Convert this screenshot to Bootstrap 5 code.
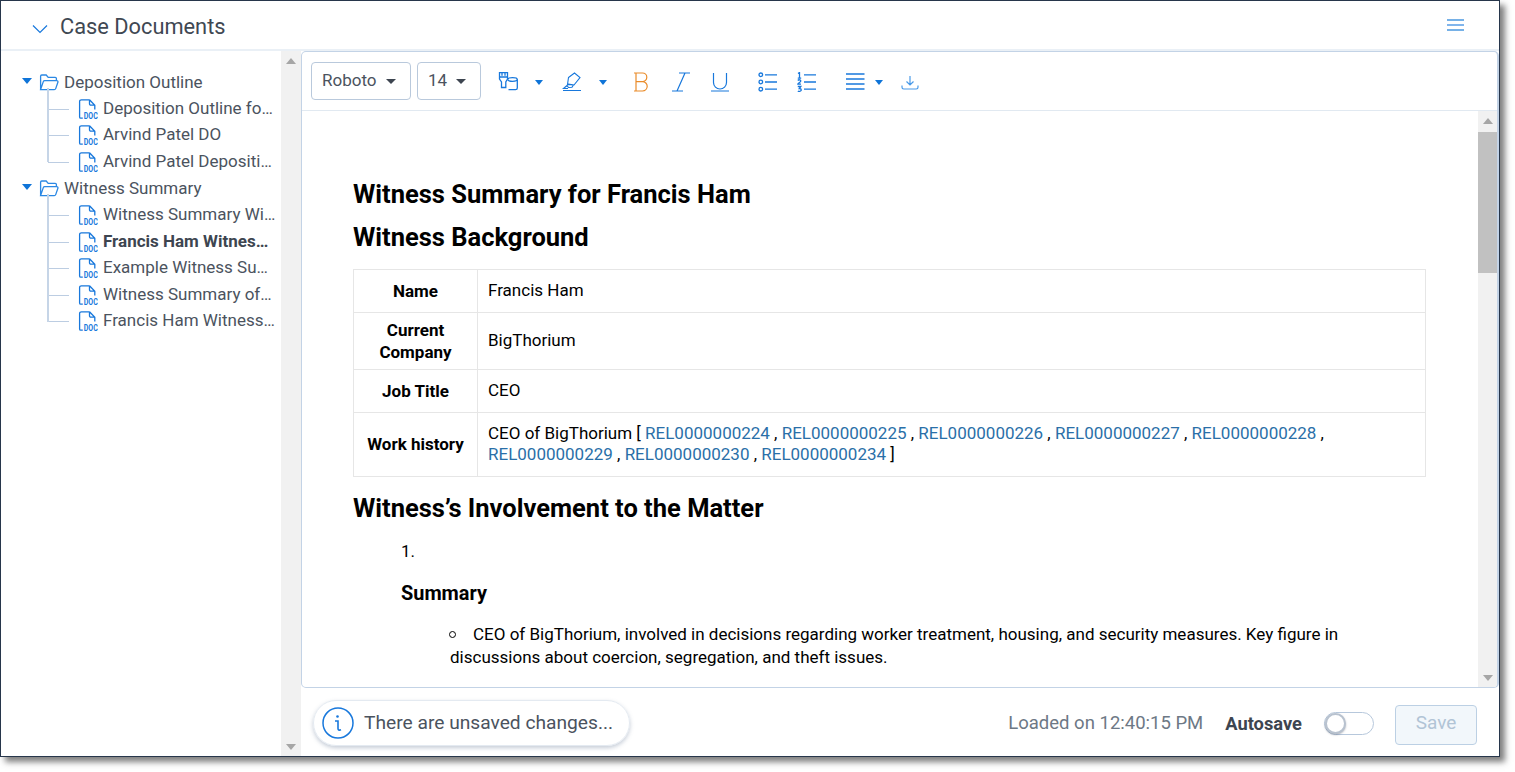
<!DOCTYPE html>
<html lang="en"><head><meta charset="utf-8"><title>Case Documents</title>
<link rel="stylesheet" href="https://cdn.jsdelivr.net/npm/bootstrap@5.3.0/dist/css/bootstrap.min.css">
<style>
html,body{height:100%;overflow:hidden;background:#fff;}
body{font-family:Roboto,"Liberation Sans",sans-serif;color:#3d4550;}
.frame{width:1500px;height:757px;border:1px solid #27364b;box-shadow:5px 5px 6px rgba(60,60,60,.65);background:#fff;}
.hdr{height:50px;border-bottom:2px solid #eaf0f6;padding-left:31px;padding-right:35px;flex:none;}
.hdr-title{font-size:21.8px;line-height:26px;margin-left:12px;margin-top:3px;color:#3f4853;}
.hdr-chev{margin-top:7px;}
.main{height:705px;min-height:0;}
.side{width:280px;flex:none;padding:18px 0 0 21px;}
.t-row{height:26.6px;white-space:nowrap;font-size:17px;color:#4b535e;position:relative;}
.t-file{padding-left:56px;}
.t-file::before{content:"";position:absolute;left:26px;width:21px;top:13px;border-top:1px solid #bccde2;}
.t-file::after{content:"";position:absolute;left:25px;top:-14px;bottom:13px;border-left:2px solid #c6d5e7;}
.t-file:first-child::after{top:-8px;}
.t-label{width:173px;overflow:hidden;text-overflow:ellipsis;display:block;line-height:25.6px;margin-left:25px;}
.t-narrow{width:170px;}
.t-f{font-weight:700;color:#3d4550;}
.t-caret{width:0;height:0;border-left:5px solid transparent;border-right:5px solid transparent;border-top:6px solid #0f74d8;margin:-3px 7px 0 0;}
.t-name{margin-left:5px;}
.t-doc{position:absolute;left:56px;top:3px;}
.sbar{width:20px;flex:none;background:#f1f1f1;position:relative;}
.arrow-up,.arrow-dn{width:0;height:0;border-left:5px solid transparent;border-right:5px solid transparent;position:absolute;left:5px;}
.arrow-up{border-bottom:6px solid #a6a6a6;top:7px;}
.arrow-dn{border-top:6px solid #a6a6a6;bottom:6px;}
.rpane{min-width:0;width:1198px;flex:none;}
.ed{height:637px;border:1px solid #c3d3e6;border-right-width:2px;border-radius:5px;flex:none;overflow:hidden;}
.tbar{height:59px;flex:none;border-bottom:1px solid #e1e9f1;padding:0 0 0 9px;position:relative;}
.sel{height:38px;border:1px solid #b9c9dc;border-radius:4px;padding:0 0 0 10px;font-size:17px;color:#4b535e;background:#fff;}
.sel-a{width:100px;margin-right:6px;}
.sel-b{width:64px;}
.caret-d{width:0;height:0;border-left:5px solid transparent;border-right:5px solid transparent;border-top:5px solid #3d4550;margin-left:9px;margin-top:1px;}
.caret-b{width:0;height:0;border-left:4.5px solid transparent;border-right:4.5px solid transparent;border-top:5px solid #0f74d8;}
.ti{position:absolute;top:20px;}
.caret-b.ti{top:28px;}
.docwrap{min-height:0;}
.doc{min-width:0;padding:69px 51px 0 51px;color:#000;font-size:17px;line-height:21px;overflow:hidden;width:1176px;flex:none;}
.doc h2{font-size:25.5px;font-weight:700;line-height:29px;margin:0 0 14px;color:#000;}
.doc .tbl-gap{margin-top:17px;}
.doc table{width:1073px;border-collapse:collapse;margin-bottom:17px;}
.doc td{border:1px solid #e6e6e6;padding:10px 10px 11px;vertical-align:middle;}
.doc td:first-child{width:124px;text-align:center;font-weight:700;padding:5.5px 10px 6.5px;line-height:22px;}
.doc a{color:#2a6fa8;text-decoration:none;}
.doc h3{font-size:25.5px;font-weight:700;line-height:29px;margin:0 0 18px;}
.li-num{padding-left:48px;margin-bottom:21px;}
.li-sum{padding-left:48px;font-weight:700;font-size:19.900px;line-height:22px;margin-bottom:18px;}
.li-bul{padding-left:97px;position:relative;width:1000px;line-height:23px;}
.li-bul::before{content:"";position:absolute;left:96px;top:8px;width:7px;height:7px;border:1px solid #000;border-radius:50%;}
.li-ind{text-indent:23px;display:block;}
.vbar{width:19px;flex:none;background:#f1f1f1;position:relative;}
.thumb{position:absolute;left:0;right:0;top:21px;height:141px;background:#c1c1c1;}
.foot{height:68px;flex:none;padding:0 22px 0 12px;}
.pill{height:46px;width:317px;border:1px solid #e4eaf1;border-radius:23px;box-shadow:0 2px 4px rgba(90,110,140,.35);font-size:19.200px;color:#4b535e;padding-left:8px;margin-top:2px;}
.pill svg{margin-right:10px;}
.loaded{font-size:18.500px;color:#6d7885;margin-right:22px;margin-top:4px;}
.autos{font-size:18.300px;font-weight:700;color:#3d4550;margin-right:22px;margin-top:4px;}
.tog{width:50px;height:23px;border:1px solid #b7c8dc;border-radius:12px;margin-right:21px;position:relative;margin-top:3px;}
.tog::before{content:"";position:absolute;left:0;top:0;width:21px;height:21px;border:2px solid #b8c2cf;border-radius:50%;background:#fff;box-shadow:0 1px 2px rgba(60,70,90,.4);}
.savebtn{width:82px;height:40px;border:1px solid #bcd0e4;border-radius:4px;background:#f2f7fb;color:#b1c4d6;font-size:19px;display:flex;align-items:center;justify-content:center;padding:0 0 2px;margin-top:5px;}
</style></head>
<body>
<svg width="0" height="0" class="position-absolute"><defs>
<symbol id="docic" viewBox="0 0 20 20"><path d="M11.500.8H3.400a1.800 1.800 0 0 0-1.800 1.800V18a1.200 1.200 0 0 0 1.200 1.200h2M11.500.8l5.300 5.400v4.300M11.500.8v4a1.300 1.300 0 0 0 1.400 1.400h3.900" fill="none" stroke="#1878dc" stroke-width="1.300"/><text x="5.800" y="19.700" font-family="Roboto,sans-serif" font-size="9.500" font-weight="700" fill="#1878dc" textLength="14" lengthAdjust="spacingAndGlyphs">DOC</text></symbol>
<symbol id="foldic" viewBox="0 0 20 17"><path d="M1.600 15.500V2.200a1.200 1.200 0 0 1 1.200-1.200h4.400l2 2.400h7a1.200 1.200 0 0 1 1.200 1.200V6.500M1.600 15.500 4.300 7.600a1.500 1.500 0 0 1 1.400-1h12.100a1.200 1.200 0 0 1 1.100 1.600l-2.200 6.400a1.500 1.500 0 0 1-1.400 1Z" fill="none" stroke="#2b88e4" stroke-width="1.300"/></symbol>
</defs></svg>
<div class="frame d-flex flex-column">
  <div class="hdr d-flex align-items-center">
    <svg class="hdr-chev" width="16" height="10" viewBox="0 0 16 10"><path d="M1 1.500 8 8.500l7-7" fill="none" stroke="#1878dc" stroke-width="1.200"/></svg>
    <div class="hdr-title">Case Documents</div>
    <svg class="ms-auto" width="17" height="12" viewBox="0 0 17 12"><path d="M0 1h17M0 11h17" stroke="#4a98e0" stroke-width="1.300"/><path d="M0 6h17" stroke="#1878dc" stroke-width="1.100"/></svg>
  </div>
  <div class="main d-flex">
    <div class="side">
      <div class="t-row d-flex align-items-center"><span class="t-caret"></span><svg width="20" height="17"><use href="#foldic"/></svg><span class="t-name">Deposition Outline</span></div>
      <div>
        <div class="t-row t-file"><svg class="t-doc" width="20" height="20"><use href="#docic"/></svg><span class="t-label">Deposition Outline for Arvind Patel</span></div>
        <div class="t-row t-file"><svg class="t-doc" width="20" height="20"><use href="#docic"/></svg><span class="t-label">Arvind Patel DO</span></div>
        <div class="t-row t-file"><svg class="t-doc" width="20" height="20"><use href="#docic"/></svg><span class="t-label">Arvind Patel Deposition Outline</span></div>
      </div>
      <div class="t-row d-flex align-items-center"><span class="t-caret"></span><svg width="20" height="17"><use href="#foldic"/></svg><span class="t-name">Witness Summary</span></div>
      <div>
        <div class="t-row t-file"><svg class="t-doc" width="20" height="20"><use href="#docic"/></svg><span class="t-label">Witness Summary Witness Summary</span></div>
        <div class="t-row t-file"><svg class="t-doc" width="20" height="20"><use href="#docic"/></svg><span class="t-label t-f">Francis Ham Witness Summary</span></div>
        <div class="t-row t-file"><svg class="t-doc" width="20" height="20"><use href="#docic"/></svg><span class="t-label">Example Witness Summary</span></div>
        <div class="t-row t-file"><svg class="t-doc" width="20" height="20"><use href="#docic"/></svg><span class="t-label t-narrow">Witness Summary of Francis</span></div>
        <div class="t-row t-file"><svg class="t-doc" width="20" height="20"><use href="#docic"/></svg><span class="t-label">Francis Ham Witness Summary</span></div>
      </div>
    </div>
    <div class="sbar"><span class="arrow-up"></span><span class="arrow-dn"></span></div>
    <div class="rpane d-flex flex-column">
      <div class="ed d-flex flex-column">
        <div class="tbar d-flex align-items-center">
          <div class="sel sel-a d-flex align-items-center">Roboto<span class="caret-d"></span></div>
          <div class="sel sel-b d-flex align-items-center">14<span class="caret-d"></span></div>
          <svg class="ti" style="left:196px" width="21" height="20" viewBox="0 0 21 20"><path d="M1.500.7H9.500V7L7.800 10V15.500H3.500V10L1.500 7ZM1.500 5h8M4 .7v3M7 .7v3" fill="none" stroke="#1878dc" stroke-width="1.300"/><ellipse cx="14.500" cy="7.500" rx="4.800" ry="1.800" fill="#fff" stroke="#1878dc" stroke-width="1.300"/><path d="M19.300 7.500V16a1.700 1.700 0 0 1-1.700 1.700H10.500" fill="none" stroke="#1878dc" stroke-width="1.300"/></svg>
          <span class="caret-b ti" style="left:233px"></span>
          <svg class="ti" style="left:260px" width="20" height="20" viewBox="0 0 20 20"><path d="M6.500 5.500 12.500 1l5.500 4.500-6 7.500-6.500-.5Zm-1.500 8 1.500-1.500 5 .800-1.500 2.500-3.500.2-1.500-2Zm0 0L1.500 16.500H6M1 18.500h18" fill="none" stroke="#1878dc" stroke-width="1.100"/></svg>
          <span class="caret-b ti" style="left:297px"></span>
          <svg class="ti" style="left:330px" width="20" height="20" viewBox="0 0 20 20"><path d="M2 1h8.500a4.300 4.300 0 0 1 0 8.600H4M10.500 9.600a4.700 4.700 0 0 1 0 9.400H2M4 1v18" fill="none" stroke="#ea8c2a" stroke-width="1.200"/></svg>
          <svg class="ti" style="left:369px" width="20" height="20" viewBox="0 0 20 20"><path d="M8 1h11M1 19h11M14 1 6 19" fill="none" stroke="#1878dc" stroke-width="1.200"/></svg>
          <svg class="ti" style="left:408px" width="20" height="20" viewBox="0 0 20 20"><path d="M3.500 1v9.500a6.500 6.500 0 0 0 13 0V1M1 19h18" fill="none" stroke="#1878dc" stroke-width="1.200"/></svg>
          <svg class="ti" style="left:456px" width="20" height="20" viewBox="0 0 20 20"><g fill="none" stroke="#1878dc" stroke-width="1.300"><circle cx="2.800" cy="2.800" r="1.800"/><circle cx="2.800" cy="10" r="1.800"/><circle cx="2.800" cy="17.200" r="1.800"/><path d="M7 2.800h12M7 10h12M7 17.200h12"/></g></svg>
          <svg class="ti" style="left:495px" width="20" height="20" viewBox="0 0 20 20"><g fill="none" stroke="#1878dc" stroke-width="1.300"><path d="M7 2.800h12M7 10h12M7 17.200h12M1 1.500l1.500-1V6M.800 6.200h3.400M.800 8.500c1-1.200 3-.8 3 .5 0 1.200-3 2.200-3 3.200h3.200M.800 14.500h3l-1.500 2c1.500 0 2 .5 2 1.500s-2 2-3.500 1"/></g></svg>
          <svg class="ti" style="left:544px" width="19" height="20" viewBox="0 0 19 20"><path d="M0 2h18.500M0 7h18.500M0 12h18.500M0 17h18.500" fill="none" stroke="#1878dc" stroke-width="1.300"/></svg>
          <span class="caret-b ti" style="left:573px"></span>
          <svg class="ti" style="left:599px;top:21px" width="18" height="20" viewBox="0 0 18 20"><path d="M9 3v9M5.500 8.500 9 12l3.500-3.500M1 12.500v1.800a1.700 1.700 0 0 0 1.700 1.700h12.600a1.700 1.700 0 0 0 1.700-1.700v-1.800" fill="none" stroke="#4a9ae8" stroke-width="1.200"/></svg>
        </div>
        <div class="docwrap d-flex flex-grow-1">
          <div class="doc">
            <h2>Witness Summary for Francis Ham</h2>
            <h2>Witness Background</h2>
            <div class="tbl-gap"></div>
            <table><tbody>
              <tr><td>Name</td><td>Francis Ham</td></tr>
              <tr><td>Current Company</td><td>BigThorium</td></tr>
              <tr><td>Job Title</td><td>CEO</td></tr>
              <tr><td>Work history</td><td>CEO of BigThorium [ <a href="#">REL0000000224</a> , <a href="#">REL0000000225</a> , <a href="#">REL0000000226</a> , <a href="#">REL0000000227</a> , <a href="#">REL0000000228</a> , <a href="#">REL0000000229</a> , <a href="#">REL0000000230</a> , <a href="#">REL0000000234</a> ]</td></tr>
            </tbody></table>
            <h3>Witness’s Involvement to the Matter</h3>
            <div class="li-num">1.</div>
            <div class="li-sum">Summary</div>
            <div class="li-bul"><span class="li-ind">CEO of BigThorium, involved in decisions regarding worker treatment, housing, and security measures. Key figure in discussions about coercion, segregation, and theft issues.</span></div>
          </div>
          <div class="vbar"><span class="arrow-up"></span><span class="thumb"></span><span class="arrow-dn"></span></div>
        </div>
      </div>
      <div class="foot d-flex align-items-center">
        <div class="pill d-flex align-items-center">
          <svg width="32" height="32" viewBox="0 0 32 32"><circle cx="16" cy="16" r="15" fill="none" stroke="#1878dc" stroke-width="1.500"/><circle cx="15.500" cy="9.500" r="1.300" fill="#1878dc"/><path d="M13 14h3v7.500c0 1.500 1 2 3 1.200" fill="none" stroke="#1878dc" stroke-width="1.600"/></svg>
          <span>There are unsaved changes...</span>
        </div>
        <div class="loaded ms-auto">Loaded on 12:40:15 PM</div>
        <div class="autos">Autosave</div>
        <div class="tog"></div>
        <button class="savebtn" type="button" disabled>Save</button>
      </div>
    </div>
  </div>
</div>
<script src="https://cdn.jsdelivr.net/npm/bootstrap@5.3.0/dist/js/bootstrap.bundle.min.js"></script>
</body></html>
